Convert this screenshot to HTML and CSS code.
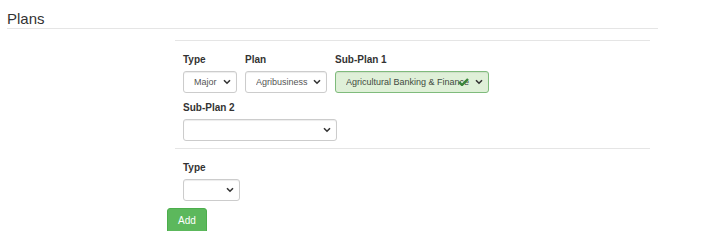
FILE: index.html
```html
<!DOCTYPE html>
<html lang="en">
<head>
    <meta charset="UTF-8">
    <meta name="viewport" content="width=device-width, initial-scale=1.0">
    <title>Plans</title>
    <link rel="stylesheet" href="styles.css">
</head>
<body>
    <div class="page">
        <h2 class="legend">Plans</h2>

        <div class="plan-section">
            <div class="field-row">
                <div class="field">
                    <label>Type</label>
                    <div class="select-wrap w-type">
                        <select><option>Major</option></select>
                        <svg class="chevron" width="8" height="6" viewBox="0 0 8 6"><path d="M1 1.2 L4 4.2 L7 1.2" fill="none" stroke="#333" stroke-width="1.6"/></svg>
                    </div>
                </div>
                <div class="field">
                    <label>Plan</label>
                    <div class="select-wrap w-plan">
                        <select><option>Agribusiness</option></select>
                        <svg class="chevron" width="8" height="6" viewBox="0 0 8 6"><path d="M1 1.2 L4 4.2 L7 1.2" fill="none" stroke="#333" stroke-width="1.6"/></svg>
                    </div>
                </div>
                <div class="field">
                    <label>Sub-Plan 1</label>
                    <div class="select-wrap w-sub success">
                        <select><option>Agricultural Banking &amp; Finance</option></select>
                        <svg class="check" width="11" height="8" viewBox="0 0 11 8"><path d="M1 4 L4 7 L10 1" fill="none" stroke="#3a853a" stroke-width="2.4"/></svg>
                        <svg class="chevron" width="8" height="6" viewBox="0 0 8 6"><path d="M1 1.2 L4 4.2 L7 1.2" fill="none" stroke="#333" stroke-width="1.6"/></svg>
                    </div>
                </div>
                <div class="field">
                    <label>Sub-Plan 2</label>
                    <div class="select-wrap w-sub">
                        <select><option></option></select>
                        <svg class="chevron" width="8" height="6" viewBox="0 0 8 6"><path d="M1 1.2 L4 4.2 L7 1.2" fill="none" stroke="#333" stroke-width="1.6"/></svg>
                    </div>
                </div>
            </div>
        </div>

        <div class="plan-section">
            <div class="field-row">
                <div class="field">
                    <label>Type</label>
                    <div class="select-wrap w-type2">
                        <select><option></option></select>
                        <svg class="chevron" width="8" height="6" viewBox="0 0 8 6"><path d="M1 1.2 L4 4.2 L7 1.2" fill="none" stroke="#333" stroke-width="1.6"/></svg>
                    </div>
                </div>
            </div>
        </div>

        <button class="btn-add" type="button">Add</button>
    </div>
</body>
</html>
```

FILE: styles.css
```css
body {
    margin: 0;
    font-family: 'Liberation Sans', Arial, sans-serif;
    color: #333;
    background: #fff;
}
.page {
    padding: 0 62px 0 7px;
}
.legend {
    margin: 0;
    padding: 10px 0 1px;
    font-size: 15px;
    font-weight: normal;
    line-height: 17px;
    color: #333;
    border-bottom: 1px solid #e5e5e5;
}
.plan-section {
    margin: 11px 8px 0 168px;
    padding: 13px 0 7px 8px;
    border-top: 1px solid #e5e5e5;
}
.plan-section + .plan-section {
    margin-top: 0;
}
.field-row {
    display: flex;
    flex-wrap: wrap;
    row-gap: 9px;
}
.field {
    margin-right: 8px;
}
.field label {
    display: block;
    font-size: 10px;
    font-weight: bold;
    line-height: 12px;
    margin-bottom: 5px;
}
.select-wrap {
    position: relative;
}
.select-wrap select {
    appearance: none;
    -webkit-appearance: none;
    display: block;
    width: 100%;
    height: 22px;
    margin: 0;
    padding: 0 18px 0 10px;
    font-family: 'Liberation Sans', Arial, sans-serif;
    font-size: 9px;
    color: #555;
    background: #fff;
    border: 1px solid #ccc;
    border-radius: 3px;
    box-shadow: inset 0 1px 1px rgba(0, 0, 0, 0.075);
}
.select-wrap.success select {
    background: #dff0d8;
    border-color: #7fbb7c;
    color: #3f4a3f;
}
.chevron {
    position: absolute;
    right: 6px;
    top: 8px;
    pointer-events: none;
}
.check {
    position: absolute;
    left: 123px;
    top: 7px;
    pointer-events: none;
}
.w-type { width: 54px; }
.w-plan { width: 82px; }
.w-sub { width: 154px; }
.w-type2 { width: 57px; }
.btn-add {
    display: block;
    margin: 0 0 0 160px;
    padding: 5px 10px;
    font-family: 'Liberation Sans', Arial, sans-serif;
    font-size: 10px;
    line-height: 14px;
    color: #fff;
    background: #5cb85c;
    border: 1px solid #4cae4c;
    border-radius: 3px;
}
```
